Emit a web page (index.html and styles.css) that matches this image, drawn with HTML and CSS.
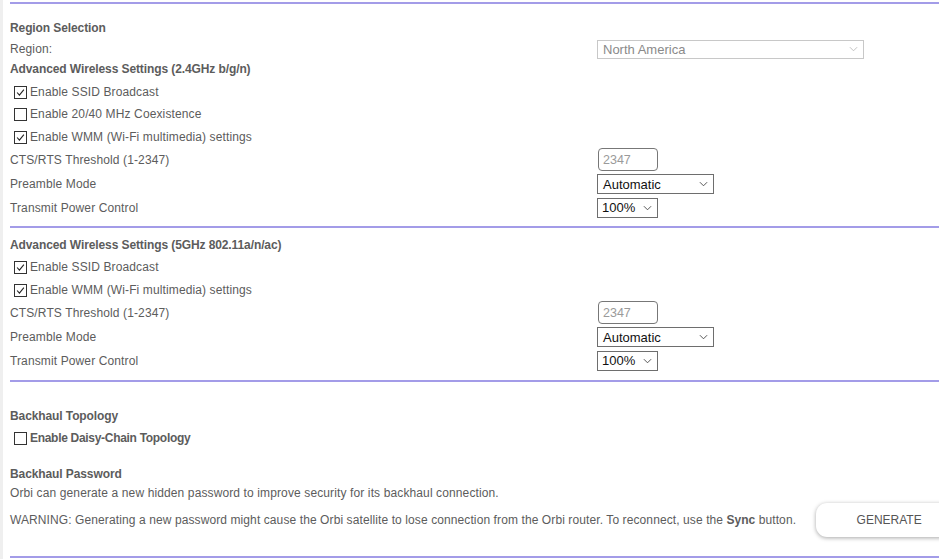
FILE: index.html
```html
<!DOCTYPE html>
<html>
<head>
<meta charset="utf-8">
<link rel="stylesheet" href="styles.css">
</head>
<body>
<div class="page">
  <div class="rule first"></div>

  <div class="row head r-region-sel">Region Selection</div>
  <div class="row field r-region">
    <span class="label">Region:</span>
    <div class="select disabled wide"><span>North America</span><svg class="chev" viewBox="0 0 10 6"><path d="M1 1 L5 5 L9 1" fill="none" stroke="#bbb" stroke-width="1"/></svg></div>
  </div>
  <div class="row head r-adv24">Advanced Wireless Settings (2.4GHz b/g/n)</div>
  <div class="row cb r-cb1"><span class="box checked"><svg viewBox="0 0 13 13"><path d="M2.5 6.5 L5.2 9.5 L10.5 3" fill="none" stroke="#222" stroke-width="1.3"/></svg></span>Enable SSID Broadcast</div>
  <div class="row cb r-cb2"><span class="box"></span>Enable 20/40 MHz Coexistence</div>
  <div class="row cb r-cb3"><span class="box checked"><svg viewBox="0 0 13 13"><path d="M2.5 6.5 L5.2 9.5 L10.5 3" fill="none" stroke="#222" stroke-width="1.3"/></svg></span>Enable WMM (Wi-Fi multimedia) settings</div>
  <div class="row field r-cts">
    <span class="label">CTS/RTS Threshold (1-2347)</span>
    <div class="input">2347</div>
  </div>
  <div class="row field r-pre">
    <span class="label">Preamble Mode</span>
    <div class="select mode"><span>Automatic</span><svg class="chev" viewBox="0 0 10 6"><path d="M1 1 L5 5 L9 1" fill="none" stroke="#444" stroke-width="1"/></svg></div>
  </div>
  <div class="row field r-tx">
    <span class="label">Transmit Power Control</span>
    <div class="select power"><span>100%</span><svg class="chev" viewBox="0 0 10 6"><path d="M1 1 L5 5 L9 1" fill="none" stroke="#444" stroke-width="1"/></svg></div>
  </div>

  <div class="rule r-rule2"></div>

  <div class="row head r-adv5">Advanced Wireless Settings (5GHz 802.11a/n/ac)</div>
  <div class="row cb r-cb4"><span class="box checked"><svg viewBox="0 0 13 13"><path d="M2.5 6.5 L5.2 9.5 L10.5 3" fill="none" stroke="#222" stroke-width="1.3"/></svg></span>Enable SSID Broadcast</div>
  <div class="row cb r-cb5"><span class="box checked"><svg viewBox="0 0 13 13"><path d="M2.5 6.5 L5.2 9.5 L10.5 3" fill="none" stroke="#222" stroke-width="1.3"/></svg></span>Enable WMM (Wi-Fi multimedia) settings</div>
  <div class="row field r-cts">
    <span class="label">CTS/RTS Threshold (1-2347)</span>
    <div class="input">2347</div>
  </div>
  <div class="row field r-pre">
    <span class="label">Preamble Mode</span>
    <div class="select mode"><span>Automatic</span><svg class="chev" viewBox="0 0 10 6"><path d="M1 1 L5 5 L9 1" fill="none" stroke="#444" stroke-width="1"/></svg></div>
  </div>
  <div class="row field r-tx">
    <span class="label">Transmit Power Control</span>
    <div class="select power"><span>100%</span><svg class="chev" viewBox="0 0 10 6"><path d="M1 1 L5 5 L9 1" fill="none" stroke="#444" stroke-width="1"/></svg></div>
  </div>

  <div class="rule r-rule3"></div>

  <div class="row head r-bt">Backhaul Topology</div>
  <div class="row cb bold r-daisy"><span class="box"></span>Enable Daisy-Chain Topology</div>
  <div class="row head r-bp">Backhaul Password</div>
  <div class="row r-orbi">Orbi can generate a new hidden password to improve security for its backhaul connection.</div>
  <div class="row r-warn">
    <span class="warn">WARNING: Generating a new password might cause the Orbi satellite to lose connection from the Orbi router. To reconnect, use the <b>Sync</b> button.</span>
    <div class="btn">GENERATE</div>
  </div>

  <div class="rule r-rule4"></div>
</div>
</body>
</html>
```

FILE: styles.css
```css
html, body {
  margin: 0;
  padding: 0;
  background: #fff;
  overflow: hidden;
  width: 939px;
  height: 559px;
}
.page {
  box-sizing: border-box;
  width: 939px;
  height: 559px;
  border-left: 3px solid #efefef;
  padding-left: 7px;
  font-family: "Liberation Sans", Arial, sans-serif;
  font-size: 12px;
  letter-spacing: 0.12px;
  color: #5c5c5c;
  display: flex;
  flex-direction: column;
}
.rule {
  height: 2px;
  background: #a39ce8;
  flex: none;
}
.rule.first { margin-top: 2px; }
.row {
  display: flex;
  align-items: center;
  flex: none;
  white-space: nowrap;
}
.head { font-weight: bold; height: 20px; letter-spacing: -0.1px; }
.field { display: grid; grid-template-columns: 587px auto; align-items: center; justify-items: start; }
.cb { height: 22px; padding-left: 4px; }
.cb.bold { font-weight: bold; letter-spacing: -0.3px; }
.box {
  box-sizing: border-box;
  width: 13px;
  height: 13px;
  border: 1px solid #333;
  background: #fff;
  margin-right: 3px;
  display: inline-flex;
}
.box svg { width: 11px; height: 11px; }

.r-region-sel { margin-top: 14px; }
.r-region { height: 20px; margin-top: 1px; }
.r-adv24 { height: 20px; }
.r-cb1 { margin-top: 2px; }
.r-cb2 { margin-top: 0; }
.r-cb3 { margin-top: 1px; }
.r-cts { height: 23px; margin-top: 0; }
.r-pre { height: 24px; margin-top: 1px; }
.r-tx { height: 23px; }
.r-rule2 { margin-top: 7px; }
.r-adv5 { margin-top: 7px; }
.r-cb4 { margin-top: 1px; }
.r-cb5 { margin-top: 1px; }
.r-rule3 { margin-top: 8px; }
.r-bt { margin-top: 24px; }
.r-daisy { margin-top: 1px; }
.r-bp { margin-top: 15px; }
.r-orbi { height: 20px; margin-top: -1px; }
.r-warn { height: 34px; margin-top: 0; }
.r-rule4 { margin-top: 19px; }

.select {
  box-sizing: border-box;
  display: flex;
  align-items: center;
  justify-content: space-between;
  border: 1px solid #6e6e6e;
  background: #fff;
  color: #111;
  font-family: "Liberation Sans", Arial, sans-serif;
  font-size: 13px;
  letter-spacing: 0;
  padding: 0 5px 0 5px;
}
.select .chev { width: 9px; height: 6px; }
.select.wide {
  width: 267px;
  height: 19px;
  border-color: #c8c8c8;
  color: #8a8a8a;
  padding-right: 5px;
}
.select.mode { width: 117px; height: 20px; }
.select.power { width: 61px; height: 20px; padding-left: 4px; }
.input {
  box-sizing: border-box;
  width: 60px;
  height: 23px;
  border: 1px solid #777;
  border-radius: 4px;
  color: #9a9a9a;
  font-size: 12.5px;
  letter-spacing: 0;
  display: flex;
  align-items: center;
  padding-left: 4px;
  margin-left: 1px;
}
.warn { letter-spacing: 0.1px; }
.warn b { font-weight: bold; letter-spacing: 0; }
.btn {
  flex: none;
  margin-left: 20px;
  width: 146px;
  height: 34px;
  box-sizing: border-box;
  border-radius: 11px;
  background: #fff;
  box-shadow: 0 1px 4px rgba(0,0,0,0.35);
  display: flex;
  align-items: center;
  justify-content: center;
  color: #555;
  font-size: 12px;
  letter-spacing: 0;
}
```
